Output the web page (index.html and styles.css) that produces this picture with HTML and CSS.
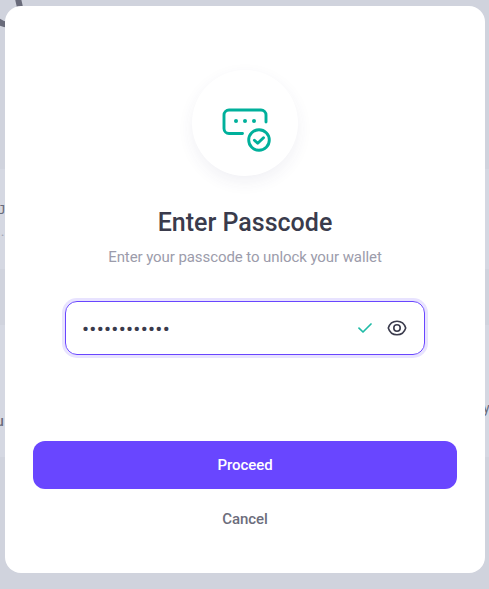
FILE: index.html
```html
<!DOCTYPE html>
<html lang="en">
<head>
    <meta charset="UTF-8">
    <meta name="viewport" content="width=device-width, initial-scale=1.0">
    <title>Enter Passcode</title>
    <link rel="stylesheet" href="styles.css">
</head>
<body>

<!-- Dimmed page behind the modal -->
<div class="page">
    <div class="band band-top">
        <svg class="ring" width="24" height="28" viewBox="0 0 24 28" fill="none">
            <path d="M18 -2C18.500 2 19.500 4 20 8M-2 21C1 23.500 4 24.500 8 24.500" stroke="#696b7a" stroke-width="6"/>
        </svg>
    </div>
    <div class="band band-row">
        <span class="peek peek-link">J</span>
        <span class="peek peek-dots">..</span>
    </div>
    <div class="band band-gap"></div>
    <div class="band band-list">
        <span class="peek peek-u">u</span>
        <span class="peek peek-y">y</span>
    </div>
</div>

<div class="modal">
    <div class="icon-circle">
        <svg width="50" height="46" viewBox="0 0 50 46" fill="none" stroke="#00b09b" stroke-width="2.9" stroke-linecap="round" stroke-linejoin="round">
            <path d="M21.500 26.500H8a5 5 0 0 1-5-5V8a5 5 0 0 1 5-5h32a5 5 0 0 1 5 5v7"/>
            <circle cx="38" cy="33" r="10.300"/>
            <path d="M33.400 33.200l3.300 3.100 5.800-5.600"/>
            <g fill="#00b09b" stroke="none">
                <circle cx="15" cy="14" r="2"/>
                <circle cx="24" cy="14" r="2"/>
                <circle cx="33" cy="14" r="2"/>
            </g>
        </svg>
    </div>

    <h2>Enter Passcode</h2>
    <p class="subtitle">Enter your passcode to unlock your wallet</p>

    <div class="field">
        <input type="text" value="••••••••••••" aria-label="Passcode">
        <svg class="check" width="14" height="10" viewBox="0 0 14 10" fill="none" stroke="#1fbba6" stroke-width="1.7" stroke-linecap="round" stroke-linejoin="round">
            <path d="M1 5.200l4 3.800L13 1"/>
        </svg>
        <svg class="eye" width="20" height="16" viewBox="0 0 20 16" fill="none" stroke="#3a3b4c" stroke-width="1.6">
            <path d="M1.300 8C2.600 3.600 6 1.200 10 1.200S17.400 3.600 18.700 8C17.400 12.400 14 14.800 10 14.800S2.600 12.400 1.300 8z" stroke-linejoin="round"/>
            <circle cx="10" cy="8" r="3.200"/>
        </svg>
    </div>

    <button type="button" class="btn-proceed">Proceed</button>
    <button type="button" class="btn-cancel">Cancel</button>
</div>

</body>
</html>
```

FILE: styles.css
```css
* {
    box-sizing: border-box;
}

body {
    margin: 0;
    height: 589px;
    overflow: hidden;
    position: relative;
    padding: 6px 4px 0 5px;
    background-color: #d0d3dd;
    font-family: Roboto, 'Liberation Sans', sans-serif;
}

.page {
    position: absolute;
    top: 0;
    left: 0;
    width: 100%;
    height: 100%;
}

.band {
    position: relative;
}

.band-top {
    height: 169px;
}

.band-row {
    height: 100px;
    background-color: #d5d8e2;
}

.band-gap {
    height: 56px;
}

.band-list {
    height: 132px;
    background-color: #d5d8e2;
}

.ring {
    position: absolute;
    top: 0;
    left: 0;
}

.peek {
    position: absolute;
    font-size: 14px;
    line-height: 16px;
    color: #696b7a;
}

.peek-link {
    top: 33px;
    left: -2px;
    font-family: 'DejaVu Sans Mono', monospace;
    font-size: 13px;
}

.peek-dots {
    top: 54px;
    left: -3px;
    color: #9fa4b3;
}

.peek-u {
    top: 88px;
    left: -4px;
    font-weight: 500;
}

.peek-y {
    top: 75px;
    left: 483px;
}

.modal {
    position: relative;
    display: flex;
    flex-direction: column;
    align-items: center;
    height: 567px;
    padding: 64px 28px 0;
    border-radius: 16px;
    background-color: #fff;
}

.icon-circle {
    display: flex;
    flex-shrink: 0;
    width: 106px;
    height: 106px;
    padding: 37px 0 0 29px;
    border-radius: 50%;
    background-color: #fff;
    box-shadow: 0 6px 16px rgba(60, 60, 120, 0.07);
}

h2 {
    margin: 32px 0 0;
    font-size: 25px;
    font-weight: 500;
    line-height: 30px;
    color: #3a3b4c;
}

.subtitle {
    margin: 9px 0 0;
    font-size: 15px;
    line-height: 20px;
    letter-spacing: -0.08px;
    color: #9c9cab;
}

.field {
    display: flex;
    align-items: center;
    flex-shrink: 0;
    width: 360px;
    height: 54px;
    margin-top: 34px;
    padding: 0 17.5px 0 16px;
    border: 1px solid #6946ff;
    border-radius: 12px;
    box-shadow: 0 0 0 3px #e8e3ff;
}

input {
    flex: 1;
    min-width: 0;
    padding: 2px 0 0;
    border: 0;
    outline: 0;
    background: none;
    font: 21px Roboto, sans-serif;
    letter-spacing: 0.25px;
    color: #3a3b4c;
}

.eye {
    margin-left: 15px;
}

button {
    border: 0;
    font: 500 15px Roboto, sans-serif;
    letter-spacing: -0.05px;
}

.btn-proceed {
    flex-shrink: 0;
    width: 424px;
    height: 48px;
    margin-top: 86px;
    border-radius: 12px;
    background-color: #6946ff;
    color: #fff;
}

.btn-cancel {
    height: 30px;
    margin-top: 15px;
    background: none;
    color: #6c6d7c;
}
```
